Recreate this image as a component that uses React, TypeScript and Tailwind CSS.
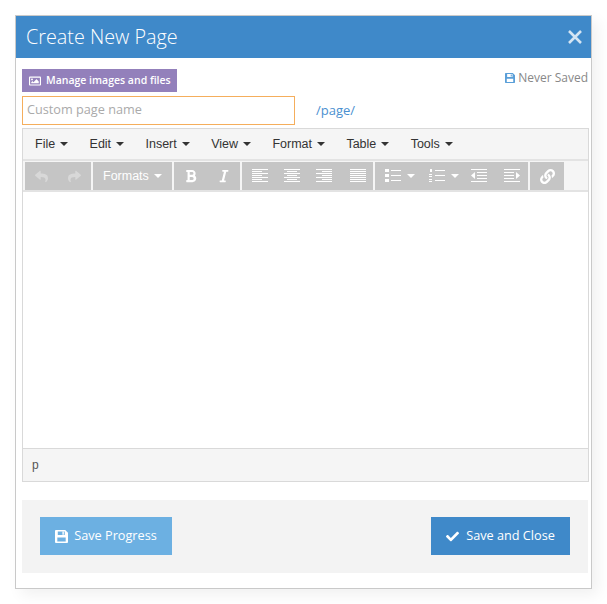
import { FaCheck, FaRegImage, FaLink, FaReply, FaShare, FaBold, FaItalic } from 'react-icons/fa';

const menus = ['File', 'Edit', 'Insert', 'View', 'Format', 'Table', 'Tools'];

const Caret = ({ className = 'border-t-[#333]' }: { className?: string }) => (
  <span className={`inline-block w-0 h-0 border-x-[4px] border-x-transparent border-t-[4px] ${className}`} />
);

// Lines icon for the align buttons
const Lines = ({ rows }: { rows: [number, number][] }) => (
  <svg width="16" height="14" viewBox="0 0 16 14" fill="#fff">
    {rows.map(([x, w], i) => (
      <rect key={i} x={x} y={i * 2} width={w} height="1" />
    ))}
  </svg>
);

const alignLeft: [number, number][] = [[0, 16], [0, 10], [0, 16], [0, 10], [0, 16], [0, 10], [0, 16]];
const alignCenter: [number, number][] = [[0, 16], [3, 10], [0, 16], [3, 10], [0, 16], [3, 10], [0, 16]];
const alignRight: [number, number][] = [[0, 16], [6, 10], [0, 16], [6, 10], [0, 16], [6, 10], [0, 16]];
const justify: [number, number][] = [[0, 16], [0, 16], [0, 16], [0, 16], [0, 16], [0, 16], [0, 16]];

const BulletList = () => (
  <svg width="16" height="14" viewBox="0 0 16 14" fill="#fff">
    <rect x="0" y="0" width="4" height="3" />
    <rect x="0" y="5" width="4" height="3" />
    <rect x="0" y="10" width="4" height="3" />
    <rect x="6" y="1" width="10" height="1" />
    <rect x="6" y="6" width="10" height="1" />
    <rect x="6" y="11" width="10" height="1" />
  </svg>
);

const NumList = () => (
  <svg width="16" height="14" viewBox="0 0 16 14" fill="#fff">
    <rect x="1" y="0" width="2" height="3" />
    <rect x="0" y="5" width="3" height="1" />
    <rect x="0" y="7" width="3" height="1" />
    <rect x="0" y="10" width="3" height="1" />
    <rect x="0" y="12" width="3" height="1" />
    <rect x="6" y="1" width="10" height="1" />
    <rect x="6" y="6" width="10" height="1" />
    <rect x="6" y="11" width="10" height="1" />
  </svg>
);

const Indent = ({ flip = false }: { flip?: boolean }) => (
  <svg width="16" height="14" viewBox="0 0 16 14" fill="#fff" className={flip ? '-scale-x-100' : ''}>
    <rect x="0" y="0" width="16" height="1" />
    <rect x="6" y="3" width="10" height="1" />
    <rect x="6" y="6" width="10" height="1" />
    <rect x="6" y="9" width="10" height="1" />
    <rect x="0" y="12" width="16" height="1" />
    <path d="M4 3 L0 6.5 L4 10 Z" />
  </svg>
);

// FA4 floppy disk
const Floppy = ({ size, className }: { size: number; className?: string }) => (
  <svg width={size} height={size} viewBox="0 0 14 14" className={className} fill="currentColor">
    <path
      fillRule="evenodd"
      d="M1 0 H11 L14 3 V13 Q14 14 13 14 H1 Q0 14 0 13 V1 Q0 0 1 0 Z M3 1.5 V5.5 H10.5 V1.5 Z M8 2 H9.5 V5 H8 Z M2.5 8 V12.5 H11.5 V8 Z"
    />
  </svg>
);

const ToolBtn = ({ children, w = 'w-[32px]' }: { children: React.ReactNode; w?: string }) => (
  <span className={`flex h-full items-center justify-center ${w}`}>{children}</span>
);

const Group = ({ children, w }: { children: React.ReactNode; w: string }) => (
  <div className={`flex h-full items-center bg-[#c5c5c5] ${w}`}>{children}</div>
);

export default function App() {
  return (
    <div className="min-h-[604px] w-[607px] bg-white pt-[15px] pl-[15px] font-['Open_Sans',sans-serif]">
      <div className="h-[574px] w-[577px] border border-[#c9c9c9] bg-white shadow-[6px_6px_14px_rgba(0,0,0,0.06)]">
        {/* Header */}
        <div className="flex h-[42px] items-center justify-between bg-[#3f89c9] pl-[10px] pr-[9px] text-white">
          <span className="text-[19.8px] leading-none font-light">Create New Page</span>
          <svg width="14" height="14" viewBox="0 0 14 14" stroke="#d5e5f3" strokeWidth="2.6">
            <path d="M1 1 L13 13 M13 1 L1 13" />
          </svg>
        </div>

        <div className="px-[6px]">
          {/* Manage + save state */}
          <div className="flex items-start justify-between pt-[11px]">
            <button className="flex h-[23px] w-[155px] items-center gap-[5px] bg-[#9380bb] pl-[7px] text-[10.5px] font-semibold text-white">
              <FaRegImage size={12} />
              Manage images and files
            </button>
            <span className="mr-[-3px] flex items-center gap-[3px] text-[12px] text-[#888]">
              <Floppy size={10} className="text-[#5a9fd8]" />
              Never Saved
            </span>
          </div>

          {/* Page name */}
          <div className="mt-[4px] flex items-center">
            <input
              placeholder="Custom page name"
              className="h-[29px] w-[273px] border border-[#f5ae5c] px-[4px] pb-[3px] text-[12.7px] text-[#555] outline-none placeholder:text-[#aaa]"
            />
            <span className="ml-[21px] text-[13px] text-[#4a90d0]">/page/</span>
          </div>

          {/* Editor */}
          <div className="mt-[3px] h-[354px] w-[567px] border border-[#d9d9d9] font-['Liberation_Sans',sans-serif]">
            <div className="flex h-[32px] items-center gap-[21.4px] border-b-2 border-[#e3e3e3] bg-[#f5f5f5] pl-[12px] text-[12.5px] text-[#333]">
              {menus.map((m) => (
                <span key={m} className="flex items-center gap-[5px]">
                  {m}
                  <Caret />
                </span>
              ))}
            </div>
            <div className="flex h-[31px] items-center gap-[2px] border-b-2 border-[#e3e3e3] bg-[#f5f5f5] pt-[1px] pl-[2px]">
              <Group w="w-[66px]">
                <ToolBtn w="w-[33px]"><FaReply size={13} className="text-[#d8d8d8]" /></ToolBtn>
                <ToolBtn w="w-[33px]"><FaShare size={13} className="text-[#d8d8d8]" /></ToolBtn>
              </Group>
              <Group w="w-[79px]">
                <span className="flex items-center gap-[5px] pl-[10px] text-[12.5px] text-white">
                  Formats
                  <Caret className="border-t-white" />
                </span>
              </Group>
              <Group w="w-[66px]">
                <ToolBtn w="w-[33px]"><FaBold size={14} className="text-white" /></ToolBtn>
                <ToolBtn w="w-[33px]"><FaItalic size={14} className="text-white" /></ToolBtn>
              </Group>
              <Group w="w-[131px]">
                <ToolBtn w="w-[36px]"><Lines rows={alignLeft} /></ToolBtn>
                <ToolBtn w="w-[28px]"><Lines rows={alignCenter} /></ToolBtn>
                <ToolBtn w="w-[36px]"><Lines rows={alignRight} /></ToolBtn>
                <ToolBtn w="w-[31px]"><Lines rows={justify} /></ToolBtn>
              </Group>
              <Group w="w-[153px]">
                <span className="flex w-[44px] items-center gap-[6px] pl-[10px]"><BulletList /><Caret className="border-t-white" /></span>
                <span className="flex w-[44px] items-center gap-[6px] pl-[10px]"><NumList /><Caret className="border-t-white" /></span>
                <ToolBtn w="w-[32px]"><Indent /></ToolBtn>
                <ToolBtn w="w-[33px]"><Indent flip /></ToolBtn>
              </Group>
              <Group w="w-[34px]">
                <ToolBtn w="w-[34px]"><FaLink size={15} className="text-white" /></ToolBtn>
              </Group>
            </div>
            <div className="h-[256px] bg-white" />
            <div className="flex h-[33px] items-center border-t border-[#d9d9d9] bg-[#f5f5f5] pl-[9px] text-[12px] text-[#555]">
              p
            </div>
          </div>

          {/* Footer */}
          <div className="mt-[18px] flex h-[73px] w-[566px] items-start justify-between bg-[#f3f3f3] pt-[17px] pl-[18px] pr-[18px]">
            <button className="flex h-[38px] w-[132px] items-center justify-center gap-[6px] bg-[#6cb0e2] text-[12.7px] text-white">
              <Floppy size={13} />
              Save Progress
            </button>
            <button className="flex h-[38px] w-[139px] items-center justify-center gap-[7px] bg-[#3f89c9] text-[12.7px] text-white">
              <FaCheck size={13} />
              Save and Close
            </button>
          </div>
        </div>
      </div>
    </div>
  );
}
